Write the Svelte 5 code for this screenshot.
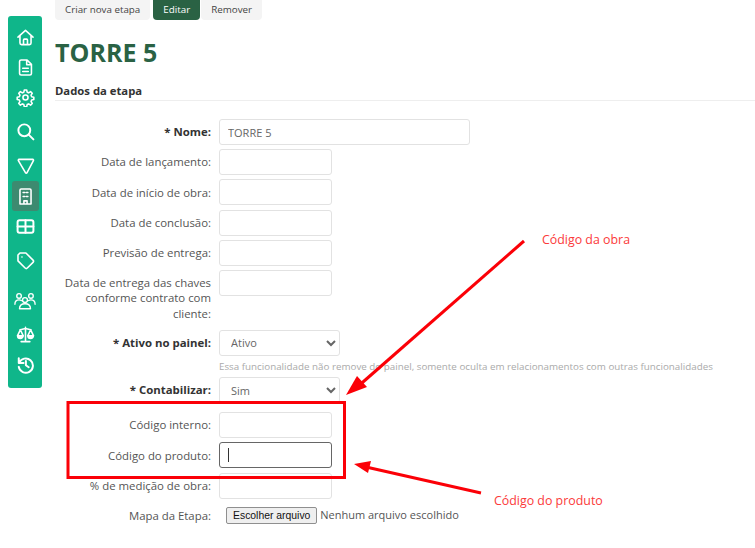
<script lang="ts">
	const dates = ['Data de lançamento:', 'Data de início de obra:', 'Data de conclusão:', 'Previsão de entrega:']
</script>

<div class="page">
	<nav class="sidebar">
		<a class="item" href="#home">
			<svg viewBox="0 0 24 24"><path d="M2.500 11.500 12 3l9.500 8.500M5 9.500V19a2 2 0 0 0 2 2h10a2 2 0 0 0 2-2V9.500M9.500 21v-6a1 1 0 0 1 1-1h3a1 1 0 0 1 1 1v6" /></svg>
		</a>
		<a class="item" href="#doc">
			<svg viewBox="0 0 24 24"><path d="M6.500 2.500h7.500l5.500 5.500v11.500a2 2 0 0 1-2 2h-11a2 2 0 0 1-2-2v-15a2 2 0 0 1 2-2ZM13.500 3v5.500h5.500M8.500 13h7M8.500 17h7" /></svg>
		</a>
		<a class="item" href="#settings">
			<svg viewBox="0 0 24 24"><circle cx="12" cy="12" r="3.200" /><path d="M10.500 2.500h3l.6 2.800 1.900.8 2.400-1.500 2.100 2.100-1.500 2.400.8 1.900 2.700.6v3l-2.700.6-.8 1.900 1.500 2.400-2.100 2.100-2.400-1.500-1.900.8-.6 2.800h-3l-.6-2.800-1.900-.8-2.400 1.500-2.100-2.100 1.500-2.400-.8-1.900-2.700-.6v-3l2.700-.6.8-1.900-1.500-2.400 2.100-2.100 2.400 1.500 1.900-.8Z" /></svg>
		</a>
		<a class="item wide-gap" href="#search">
			<svg viewBox="0 0 24 24"><circle cx="10.500" cy="10.500" r="7.500" class="thick" /><path class="thick" d="m16 16 6 6" /></svg>
		</a>
		<a class="item wide-gap" href="#filter">
			<svg viewBox="0 0 24 24"><path d="M3 4.500a1 1 0 0 1 .8-1.500h17.400a1 1 0 0 1 .8 1.500L13.800 20a1 1 0 0 1-1.700 0Z" /></svg>
		</a>
		<a class="item active" href="#building">
			<svg viewBox="0 0 24 24"><path d="M6.500 2.500h11a1.500 1.500 0 0 1 1.500 1.500v17.500H5V4a1.500 1.500 0 0 1 1.500-1.500ZM10 21.500v-4h4v4M9 7h2M13 7h2M9 12h2M13 12h2" /></svg>
		</a>
		<a class="item" href="#table">
			<svg viewBox="0 0 24 24"><rect class="thick" x="2" y="4" width="20" height="16" rx="2.500" /><path class="thick" d="M2 12h20M12 4v16" /></svg>
		</a>
		<a class="item wide-gap" href="#tag">
			<svg viewBox="0 0 24 24"><path d="M2.500 5 5 2.500h7.500l9 9a2 2 0 0 1 0 2.800l-7.200 7.200a2 2 0 0 1-2.800 0l-9-9ZM7.500 7.500h.1" /></svg>
		</a>
		<a class="item people" href="#people">
			<svg viewBox="0 0 24 24"><circle cx="5.500" cy="6.500" r="2.500" /><circle cx="18.500" cy="6.500" r="2.500" /><circle cx="12" cy="11" r="2.700" /><path d="M1 15.500c0-3 1.800-4.700 4.500-4.700 1 0 1.800.2 2.500.7M23 15.500c0-3-1.800-4.700-4.500-4.700-1 0-1.800.2-2.500.7M6 20.500c0-3.500 2.500-5.500 6-5.500s6 2 6 5.500Z" /></svg>
		</a>
		<a class="item balance" href="#balance">
			<svg viewBox="0 0 24 24"><path d="M12 3v17.500M6.500 21h11M5 6c3 0 5-1.500 7-1.500s4 1.500 7 1.500M5.500 6 2 13.500h7ZM18.500 6 15 13.500h7Z" /><path class="fill" d="M2 13.500h7a3.500 3.500 0 0 1-7 0ZM15 13.500h7a3.500 3.500 0 0 1-7 0Z" /></svg>
		</a>
		<a class="item" href="#history">
			<svg viewBox="0 0 24 24"><path class="thick" d="M3.500 4v6h6M4 10A9 9 0 1 1 3.500 15M12.500 7.500V13l3.500 2.500" /></svg>
		</a>
	</nav>

	<main class="content">
		<div class="tabs">
			<button class="tab">Criar nova etapa</button>
			<button class="tab current">Editar</button>
			<button class="tab">Remover</button>
		</div>

		<h1>TORRE 5</h1>
		<h2>Dados da etapa</h2>

		<form class="form">
			<label class="row required">
				<span class="label">* Nome:</span>
				<input class="wide" value="TORRE 5" />
			</label>
			{#each dates as text}
				<label class="row">
					<span class="label">{text}</span>
					<input />
				</label>
			{/each}
			<label class="row tall">
				<span class="label">Data de entrega das chaves conforme contrato com cliente:</span>
				<input />
			</label>
			<label class="row required">
				<span class="label">* Ativo no painel:</span>
				<select><option>Ativo</option></select>
			</label>
			<p class="help">Essa funcionalidade não remove do painel, somente oculta em relacionamentos com outras funcionalidades</p>
			<label class="row required">
				<span class="label">* Contabilizar:</span>
				<select><option>Sim</option></select>
			</label>
			<label class="row after-select">
				<span class="label">Código interno:</span>
				<input />
			</label>
			<label class="row">
				<span class="label">Código do produto:</span>
				<span class="focused"><span class="caret"></span></span>
			</label>
			<label class="row">
				<span class="label">% de medição de obra:</span>
				<input />
			</label>
			<div class="row file">
				<span class="label">Mapa da Etapa:</span>
				<span class="picker"><button type="button">Escolher arquivo</button> Nenhum arquivo escolhido</span>
			</div>
		</form>
	</main>

	<!-- anotações por cima do print -->
	<svg class="marks" viewBox="0 0 755 548">
		<rect x="68" y="402.500" width="276.500" height="75" fill="none" stroke="#fb0007" stroke-width="3" />
		<path d="M524 241 355 389" stroke="#fb0007" stroke-width="3" fill="none" />
		<path d="M346 395 367 387 357 376Z" fill="#fb0007" />
		<path d="M481 493 366 467" stroke="#fb0007" stroke-width="3" fill="none" />
		<path d="M354 464 371 461 368 473Z" fill="#fb0007" />
	</svg>
	<span class="note obra">Código da obra</span>
	<span class="note produto">Código do produto</span>
</div>

<style>
	:global(body) {
		margin: 0;
		background: #fff;
	}

	.page {
		position: relative;
		width: 755px;
		height: 548px;
		overflow: hidden;
		display: flex;
		align-items: flex-start;
		font-family: 'Open Sans', 'Noto Sans', sans-serif;
		font-size: 11.400px;
		color: #555;
	}

	.sidebar {
		width: 34px;
		height: 372px;
		margin: 16px 13px 0 8px;
		flex-shrink: 0;
		box-sizing: border-box;
		padding-top: 6px;
		display: flex;
		flex-direction: column;
		align-items: center;
		background: #0fb68a;
		border-radius: 3px;
	}

	.item {
		width: 27px;
		height: 30px;
		display: flex;
		align-items: center;
		justify-content: center;
		border-radius: 3px;
	}

	.item.wide-gap {
		margin-top: 4.500px;
	}

	.item.people {
		margin-top: 10px;
	}

	.item.balance {
		margin-top: 3.500px;
	}

	.item.active {
		background: #3d8a70;
	}

	.item svg {
		width: 19px;
		height: 19px;
		fill: none;
		stroke: #fff;
		stroke-width: 2;
		stroke-linecap: round;
		stroke-linejoin: round;
	}

	.item.people svg {
		width: 22px;
		height: 22px;
		stroke-width: 1.500;
	}

	.item svg .thick {
		stroke-width: 2.500;
	}

	.item svg .fill {
		fill: #fff;
	}

	.content {
		flex: 1;
		min-width: 0;
	}

	.tabs {
		display: flex;
		height: 21px;
	}

	.tab {
		border: 0;
		padding: 0 10px;
		height: 21px;
		margin-top: -1px;
		background: #f4f4f4;
		border-radius: 0 0 4px 4px;
		font: 9.800px 'Open Sans', sans-serif;
		color: #444;
	}

	.tab.current {
		margin: -1px 1px 0 3px;
		background: #2a6244;
		color: #fff;
	}

	h1 {
		margin: 17px 0 0;
		font-size: 25px;
		line-height: 28px;
		font-weight: 700;
		color: #2a6244;
	}

	h2 {
		margin: 17px 0 0;
		padding: 0 0 2px;
		height: 15px;
		font-size: 11.300px;
		line-height: 15px;
		font-weight: 700;
		color: #333;
		border-bottom: 1px solid #eee;
	}

	.form {
		margin: 18px 0 0;
		display: flex;
		flex-direction: column;
		gap: 4.200px;
	}

	.row {
		display: grid;
		grid-template-columns: 156px auto;
		column-gap: 8px;
		justify-content: start;
		align-items: center;
	}

	.row.tall {
		align-items: start;
		margin-bottom: 4px;
	}

	.row.after-select {
		margin-top: 5px;
	}

	.label {
		text-align: right;
		line-height: 15.500px;
	}

	.row.tall .label {
		padding-top: 5px;
	}

	.required .label {
		font-weight: 700;
		color: #333;
	}

	input,
	select,
	.focused {
		box-sizing: border-box;
		width: 113px;
		height: 26px;
		padding: 0 8px;
		background: #fff;
		border: 1px solid #e2e2e2;
		border-radius: 3px;
		font: 11px 'Open Sans', sans-serif;
		color: #666;
		outline: none;
	}

	input.wide {
		width: 251px;
	}

	select {
		width: 121px;
		padding: 0 7px;
	}

	.focused {
		display: flex;
		align-items: center;
		border-color: #666;
	}

	.caret {
		width: 1px;
		height: 14px;
		background: #333;
	}

	.help {
		margin: 0 0 0 164px;
		height: 13px;
		font-size: 9.800px;
		line-height: 14px;
		color: #aaa;
		white-space: nowrap;
	}

	.row.file {
		margin-top: 4px;
	}

	.picker {
		padding-left: 7px;
		font-size: 11px;
		white-space: nowrap;
	}

	.picker button {
		height: 17px;
		padding: 0 6px;
		border: 1px solid #8f8f8f;
		border-radius: 2px;
		background: #efefef;
		font: 10.400px 'Liberation Sans', sans-serif;
		color: #111;
	}

	.marks {
		position: absolute;
		left: 0;
		top: 0;
		width: 755px;
		height: 548px;
		pointer-events: none;
	}

	.note {
		position: absolute;
		font-size: 12.400px;
		line-height: 16px;
		color: #fb3a3a;
	}

	.note.obra {
		left: 542px;
		top: 232px;
	}

	.note.produto {
		left: 494px;
		top: 493px;
	}
</style>
